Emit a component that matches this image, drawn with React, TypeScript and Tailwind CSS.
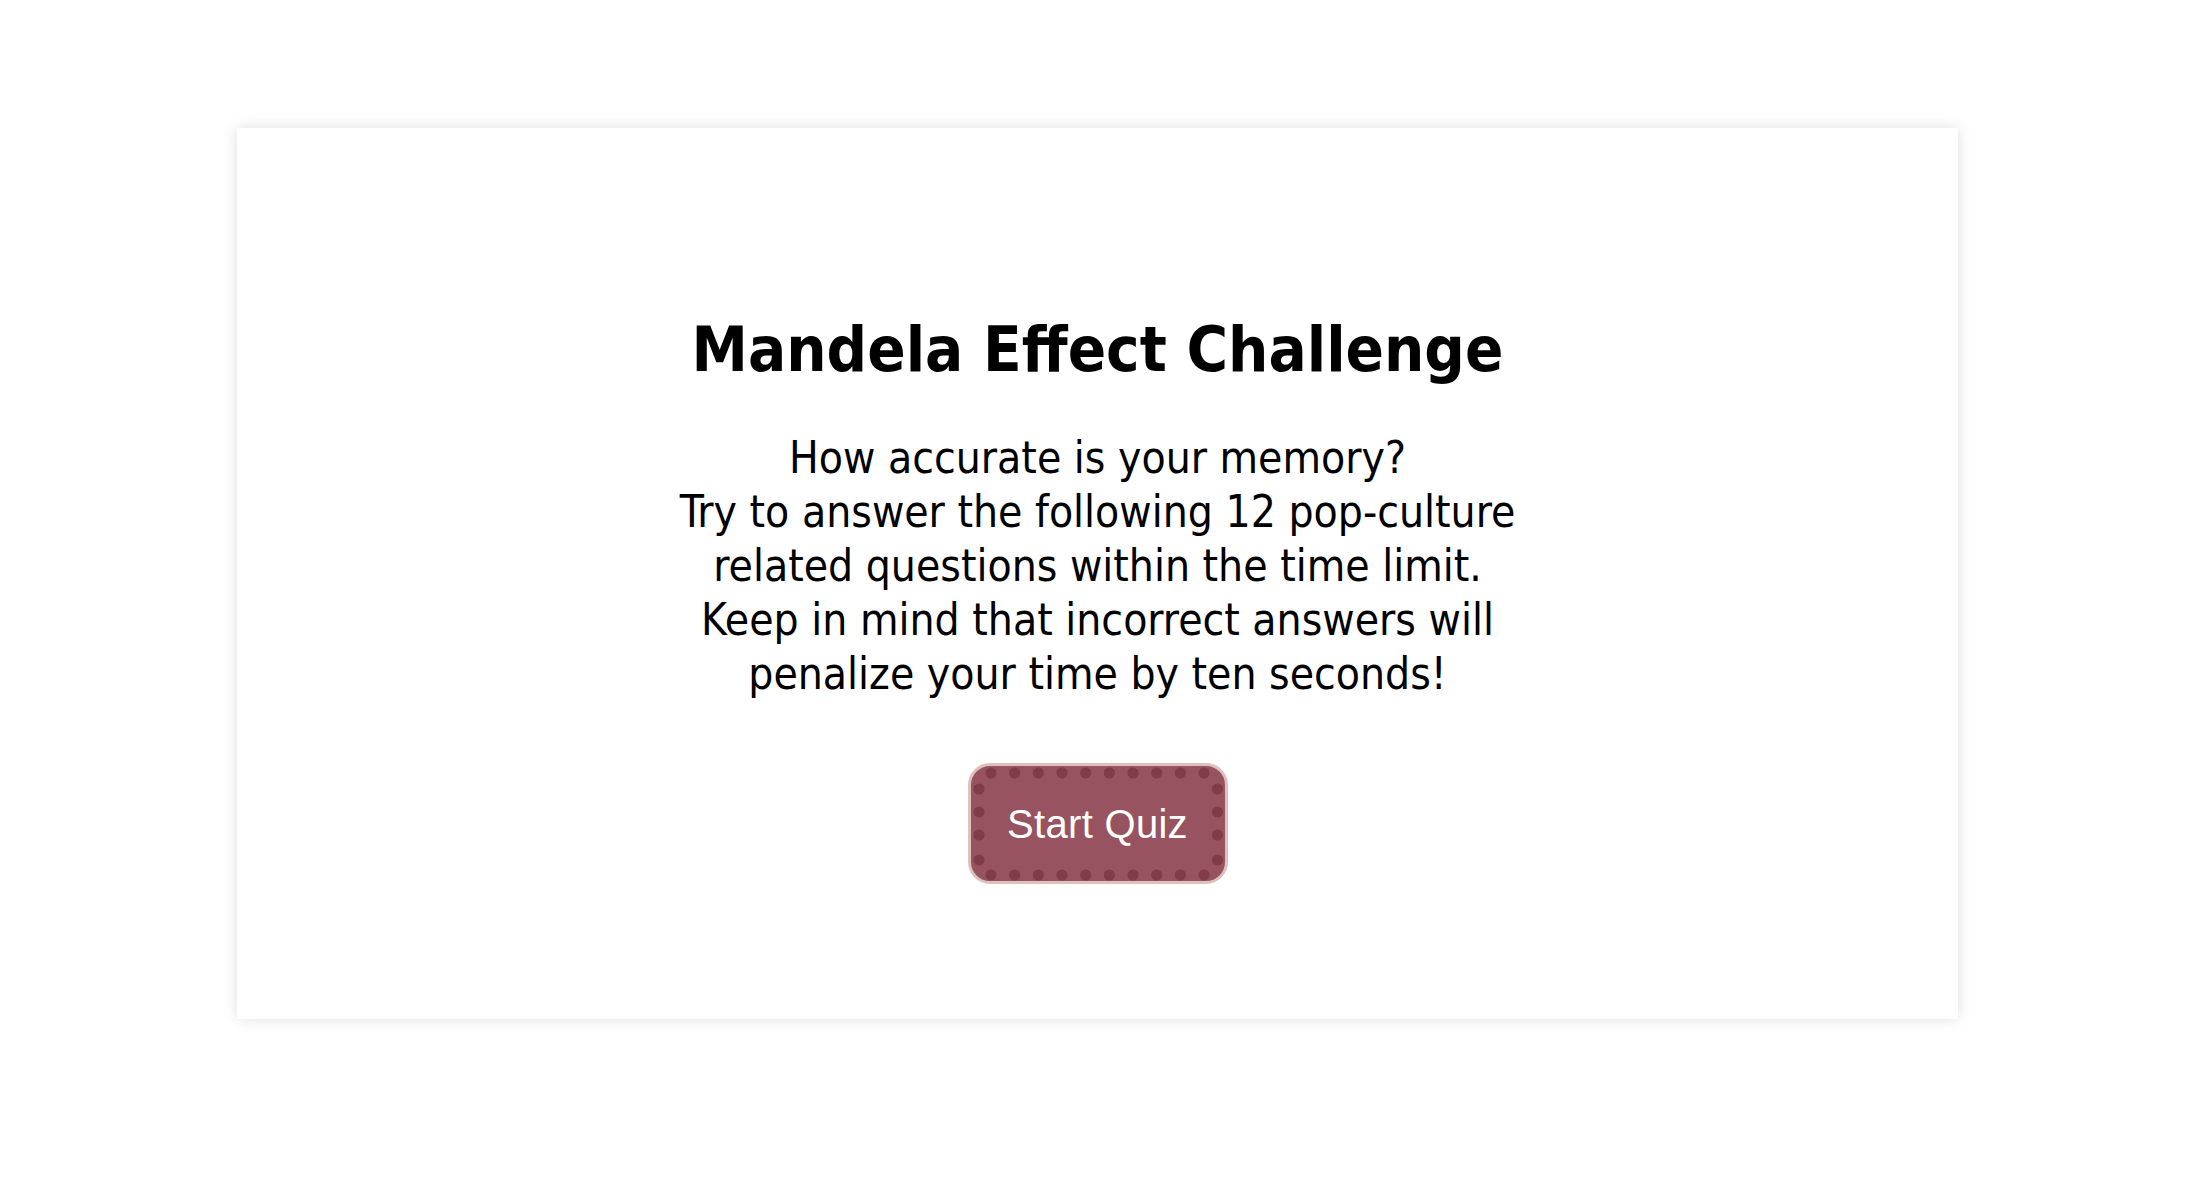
import React from "react";

const topXs = Array.from({ length: 10 }, (_, i) => 23 + i * 23.67);
const sideYs = [26, 49, 72, 97];

export default function App() {
  return (
    <div className="min-h-[1178px] w-full bg-white pt-[128px]">
      <div className="ml-[237px] flex h-[891px] w-[1721px] flex-col items-center bg-white pt-[186px] shadow-[0_0_14px_rgba(0,0,0,0.13)]">
        <h1 className="font-['DejaVu_Sans_Condensed','DejaVu_Sans',sans-serif] text-[63px] font-bold leading-[72px] text-black">
          Mandela Effect Challenge
        </h1>
        <p className="mt-[45px] text-center font-['DejaVu_Sans_Condensed','DejaVu_Sans',sans-serif] text-[44px] leading-[54px] text-black">
          How accurate is your memory?
          <br />
          Try to answer the following 12 pop-culture
          <br />
          related questions within the time limit.
          <br />
          Keep in mind that incorrect answers will
          <br />
          penalize your time by ten seconds!
        </p>
        <button className="relative mt-[62px] flex h-[121px] w-[260px] items-center justify-center overflow-hidden rounded-[22px] border-[3px] border-[#dcc1bc] bg-[#975460] font-['Liberation_Sans',Arial,sans-serif] text-[40px] tracking-[0.3px] text-white">
          <svg
            className="absolute -left-[3px] -top-[3px]"
            width="260"
            height="121"
            viewBox="0 0 260 121"
            aria-hidden="true"
          >
            {topXs.map((x) => (
              <circle key={`t${x}`} cx={x} cy={10} r={5.6} fill="#823c49" />
            ))}
            {topXs.map((x) => (
              <circle key={`b${x}`} cx={x} cy={112} r={5.6} fill="#823c49" />
            ))}
            {sideYs.map((y) => (
              <circle key={`l${y}`} cx={11} cy={y} r={5.6} fill="#823c49" />
            ))}
            {sideYs.map((y) => (
              <circle key={`r${y}`} cx={249.5} cy={y} r={5.6} fill="#823c49" />
            ))}
          </svg>
          <span className="relative">Start Quiz</span>
        </button>
      </div>
    </div>
  );
}
